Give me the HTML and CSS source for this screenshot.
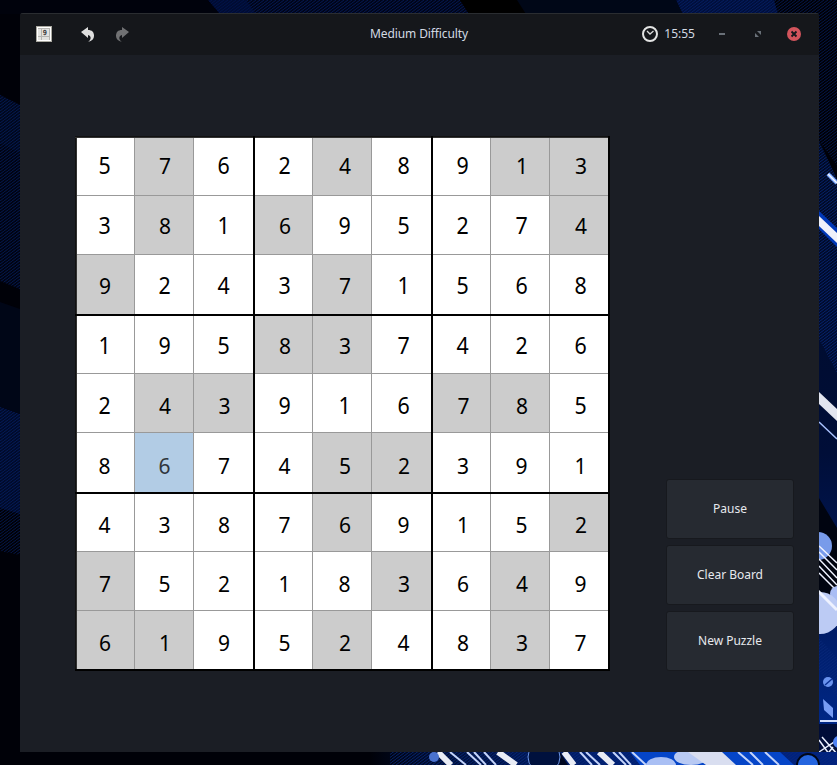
FILE: index.html
```html
<!DOCTYPE html>
<html lang="en">
<head>
<meta charset="utf-8">
<title>Sudoku</title>
<link rel="stylesheet" href="styles.css">
</head>
<body>
<svg class="wallpaper" viewBox="0 0 837 765" aria-hidden="true">
  <defs>
    <pattern id="hatch" width="4" height="3" patternUnits="userSpaceOnUse">
      <path d="M0 3L4 0" stroke="#08287a" stroke-width=".8"/>
    </pattern>
    <linearGradient id="deep" x1="0" y1="0" x2="0" y2="1">
      <stop offset="0" stop-color="#000a25"/><stop offset=".5" stop-color="#000e38"/><stop offset=".75" stop-color="#001a60"/><stop offset="1" stop-color="#002c94"/>
    </linearGradient>
    <linearGradient id="floor">
      <stop offset="0" stop-color="#000108"/><stop offset=".15" stop-color="#000f38"/><stop offset=".5" stop-color="#001f70"/><stop offset="1" stop-color="#002280"/>
    </linearGradient>
  </defs>
  <rect width="837" height="765" fill="#000108"/>
  <!-- left edge -->
  <path d="M0 95l20 10v184l-20-8z" fill="#000414"/>
  <path d="M0 95l20 10v48l-20-10z" fill="#00081f"/>
  <path d="M0 95l20 10v184l-20-8z" fill="url(#hatch)" opacity=".7"/>
  <path d="M0 302l20 7v105l-20-7z" fill="#000617"/>
  <path d="M0 407l20 7v100l-20-6z" fill="#000b2c"/>
  <path d="M0 407l20 7v141l-20-4z" fill="url(#hatch)" opacity=".7"/>
  <!-- top edge -->
  <path d="M0 0h208l12 14H0z" fill="#00020c"/>
  <path d="M130 0h24l6 14h-23z" fill="#001044" opacity=".9"/>
  <path d="M130 0h24l6 14h-23z" fill="url(#hatch)" opacity=".7"/>
  <path d="M0 0h208l12 14H0z" fill="#00020c"/>
  <path d="M208 0h252l9 14H220z" fill="#00051a"/>
  <path d="M208 0h252l9 14H220z" fill="url(#hatch)" opacity=".7"/>
  <path d="M208 0h38l10 14h-36z" fill="#001044" opacity=".6"/>
  <path d="M460 0h57l9 14h-57z" fill="#000"/>
  <path d="M517 0h159l7 14H526z" fill="#000717"/>
  <path d="M676 0h98l4 14H683z" fill="#000f3d"/>
  <path d="M676 0h161v165l-18-24V14H683z" fill="url(#hatch)" opacity=".7"/>
  <!-- right edge -->
  <path d="M819 141l18 38v586h-18z" fill="url(#deep)"/>
  <path d="M819 141l18 38v194l-18-34z" fill="url(#hatch)"/>
  <path d="M828 174l9 9" stroke="#7daaff" stroke-width="4"/>
  <path d="M828 174l9 9" stroke="#f2f5ff" stroke-width="1.500"/>
  <path d="M819 211l18 17v19l-18-18z" fill="#0038b8"/>
  <path d="M819 216l18 17v10l-18-17z" fill="#eef0fa"/>
  <path d="M819 392l18 17v12l-18-17z" fill="#e2e5ef"/>
  <path d="M819 422l18 17" stroke="#a9c3ff" stroke-width="1.500"/>
  <path d="M819 498l18 30v82l-18-10z" fill="#000410"/>
  <circle cx="818" cy="546" r="14" fill="#789bea"/>
  <path d="M819 546l18 17M819 552l18 18M819 559l18 19M819 566l18 19M819 573l18 18" stroke="#eef2ff" stroke-width="1.500"/>
  <circle cx="838" cy="594" r="8" fill="#a9bdf4"/>
  <circle cx="820" cy="613" r="21" fill="#bccbf4"/>
  <path d="M817 590l20 20" stroke="#eef2ff" stroke-width="3"/>
  <path d="M819 638l18 20v40l-18-28z" fill="url(#hatch)"/>
  <circle cx="828" cy="682" r="5" fill="#6a93ee"/>
  <path d="M825 685l7-6" stroke="#0a2f92" stroke-width="1.500"/>
  <path d="M823 699l10 9v10l-9-8z" fill="#789df4"/>
  <path d="M819 724h18v41h-18z" fill="#000d38"/>
  <path d="M820 721h17" stroke="#d5e1ff" stroke-width="2"/>
  <path d="M819 740l18 25M819 752l18-12M822 737l15 17M819 765l14-18" stroke="#eaf0ff" stroke-width="1.500"/>
  <circle cx="839" cy="742" r="6" fill="#4f83f4"/>
  <!-- bottom edge -->
  <path d="M370 752h467v13H370z" fill="url(#floor)"/>
  <path d="M390 752h447v13H390z" fill="url(#hatch)"/>
  <path d="M630 752h150l14 13H640z" fill="#0545c8"/>
  <path d="M528 752h32l8 13h-39z" fill="#000822"/>
  <path d="M438 752l13 13M498 752l18 13M564 752l10 13M599 752l14 13" fill="none" stroke="#e9ecf5" stroke-width="6"/>
  <path d="M450 752l16 13M467 752l14 13M474 752l12 13M484 752l12 13M580 752l12 13M586 752l14 13M613 752l13 13M619 752l12 13M632 752l14 13M738 752l15 13M750 752l13 13M765 752l14 13" fill="none" stroke="#c3d3fa" stroke-width="2"/>
  <circle cx="434" cy="757" r="5" fill="#4a72ce"/>
  <circle cx="544" cy="757" r="16" fill="#00113d" stroke="#6c96e9"/>
  <ellipse cx="661" cy="765" rx="15" ry="8" fill="#a9bff4"/>
  <ellipse cx="691" cy="757" rx="17" ry="8" fill="#b8c9f3"/>
  <path d="M688 752h34l14 13h-30z" fill="#d9def0"/>
  <circle cx="808" cy="765" r="11" fill="#2565df" stroke="#000718" stroke-width="2"/>
</svg>
<main class="window">
  <header class="titlebar">
    <div class="tools">
      <svg class="app-icon" viewBox="0 0 16 16">
        <path d="M0 0h16v16H0z" fill="#aaa9a1"/><path d="M1 1h14v14H1z" fill="#fff"/>
        <path d="M2 2h12v12H2z" fill="#e2e2df"/>
        <path d="M5.500 2v12M2 10.500h12M13.500 2v12M2 2.500h12" stroke="#b5b5b1"/>
        <text x="6.800" y="9" class="icon-digit">9</text>
      </svg>
      <svg class="undo" viewBox="0 0 14 16">
        <path d="M0 6L7 1v3c4 0 6 2 6 6 0 3-2 5-6 6 3-2 4-6 0-7v3z" fill="#dedede"/>
      </svg>
      <svg class="redo" viewBox="0 0 14 16">
        <path d="M14 6L7 1v3C3 4 1 6 1 10c0 3 2 5 6 6-3-2-4-6 0-7v3z" fill="#707173"/>
      </svg>
    </div>
    <h1>Medium Difficulty</h1>
    <div class="status">
      <svg class="clock" viewBox="0 0 16 16" fill="none">
        <circle cx="8" cy="8" r="7" stroke="#e2e3e3" stroke-width="2"/>
        <path d="M5 5l3 3 3.500-3" stroke="#dadbdb" stroke-width="1.300"/>
      </svg>
      <time>15:55</time>
      <svg class="minimize" viewBox="0 0 6 2"><path d="M0 0h6v2H0z" fill="#697078"/></svg>
      <svg class="maximize" viewBox="0 0 6 6"><path d="M2 0h4v4zM0 2v4h4z" fill="#697078"/></svg>
      <svg class="close" viewBox="0 0 14 14">
        <circle cx="7" cy="7" r="7" fill="#d2545c"/>
        <path d="M4.500 4.500l5 5m0-5l-5 5" stroke="#15171c" stroke-width="1.900"/>
      </svg>
    </div>
  </header>
  <div class="content">
    <div class="board" id="board"></div>
    <div class="actions">
      <button>Pause</button>
      <button>Clear Board</button>
      <button>New Puzzle</button>
    </div>
  </div>
</main>
<script src="script.js"></script>
</body>
</html>
```
FILE: styles.css
```css
* { box-sizing: border-box; }
body { margin: 0; width: 837px; height: 765px; overflow: hidden; background: #000108; font-family: "Noto Sans", sans-serif; font-size: 12px; }
svg { display: block; flex: none; }
.wallpaper { position: absolute; inset: 0; width: 837px; height: 765px; z-index: -1; }
.window { width: 799px; height: 739px; margin: 13px 0 0 20px; background: #1b1e25; border-radius: 3px 3px 0 0; overflow: hidden; }
.titlebar { display: grid; grid-template-columns: 1fr auto 1fr; align-items: center; height: 42px; padding: 0 18px 1px 16px; background: #15171b; border-top: 1px solid #2a2d31; color: #d3dae3; }
.tools, .status { display: flex; align-items: center; }
.status { justify-content: flex-end; }
h1 { margin: 0; padding: 0 0 0 1px; font-size: 12px; font-weight: 400; line-height: 18px; letter-spacing: -0.12px; }
.app-icon { width: 16px; height: 16px; }
.icon-digit { font: bold 7px "DejaVu Sans Mono", monospace; fill: #333; }
.undo { width: 14px; height: 16px; margin-left: 29px; }
.redo { width: 14px; height: 16px; margin-left: 20px; }
.clock { width: 16px; height: 16px; }
time { margin-left: 6px; line-height: 18px; }
.minimize { width: 6px; height: 2px; margin-left: 24px; }
.maximize { width: 6px; height: 6px; margin-left: 30px; }
.close { width: 14px; height: 14px; margin-left: 26px; }
.content { display: flex; align-items: flex-end; justify-content: space-between; height: 697px; padding: 0 25px 81px 55px; }
.board { position: relative; display: grid; grid-template-columns: 57px 58px 60px 57px 58px 60px 57px 58px 58px; grid-template-rows: 57px 58px 60px 57px 58px 60px 57px 58px 58px; gap: 1px; width: 535px; height: 535px; padding: 1px 0 0 1px; background: #999; border: solid #000; border-width: 1px 2px 2px 1px; }
.board::after { content: ""; position: absolute; inset: -1px 0 0 -1px; pointer-events: none; background:
  linear-gradient(#000, #000) 178px 0 / 2px 100% no-repeat,
  linear-gradient(#000, #000) 356px 0 / 2px 100% no-repeat,
  linear-gradient(#000, #000) 0 178px / 100% 2px no-repeat,
  linear-gradient(#000, #000) 0 356px / 100% 2px no-repeat,
  linear-gradient(#000, #444) 0 0 / 100% 2px no-repeat,
  linear-gradient(90deg, #000, #444) 0 0 / 2px 100% no-repeat; }
.cell { display: flex; justify-content: center; background: #fff; color: #000; font-size: 21px; line-height: 30px; padding-top: var(--drop); }
.cell span { position: relative; left: var(--nudge); height: 30px; }
.tall span { top: -1.5px; font-size: 23px; transform: scaleX(.93); }
.given { background: #ccc; }
.given span { margin-left: 1px; }
.selected { background: #b2cce5; color: #30363c; }
.actions { display: flex; flex-direction: column; gap: 6px; width: 128px; }
button { height: 60px; padding: 0 0 2px; border: 1px solid #17191e; border-radius: 3px; background: #262a31; color: #e6e9ee; font: 12px "Noto Sans", sans-serif; letter-spacing: -0.02px; }
```
FILE: script.js
```js
const rows = [
  "576248913", "381695274", "924371568",
  "195837426", "243916785", "867452391",
  "438769152", "752183649", "619524837"
];
const given = [
  "010010011", "010100001", "100010000",
  "000110000", "011000110", "000011000",
  "000010001", "100001010", "110010010"
];
const drop = [13, 15, 16, 15, 17, 18, 16, 17, 17];
const nudge = [-1, 0.5, 0, 1, 2.5, 1.5, 1.5, 1.5, 1.5];
const board = document.getElementById("board");
rows.forEach((row, r) => {
  [...row].forEach((digit, c) => {
    const cell = document.createElement("div");
    const isGiven = given[r][c] === "1";
    cell.className = "cell";
    if (isGiven) cell.classList.add("given");
    if (r === 5 && c === 1) cell.classList.add("selected");
    if (!isGiven && r < 5) cell.classList.add("tall");
    cell.style.setProperty("--drop", drop[r] + "px");
    cell.style.setProperty("--nudge", nudge[c] + "px");
    const label = document.createElement("span");
    label.textContent = digit;
    cell.append(label);
    board.append(cell);
  });
});
```
